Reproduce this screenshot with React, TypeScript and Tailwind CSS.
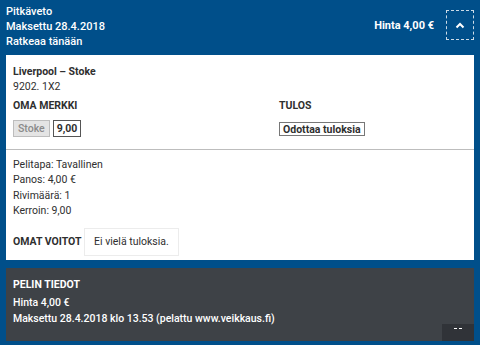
import React from "react";

export default function App() {
  return (
    <div
      className="w-[480px] h-[345px] bg-[#004f8a] overflow-hidden text-[10.5px] leading-[15px]"
      style={{ fontFamily: "Roboto, 'Liberation Sans', sans-serif" }}
    >
      {/* Header */}
      <div className="flex items-start justify-between pl-[6px] pr-[6px] pt-[4px] h-[55px]">
        <div className="text-white font-medium text-[11px]">
          <div>Pitkäveto</div>
          <div>Maksettu 28.4.2018</div>
          <div>Ratkeaa tänään</div>
        </div>
        <div className="flex items-center gap-[12px] pt-[6px]">
          <span className="text-white font-bold text-[11px]">Hinta 4,00 €</span>
          <div className="w-[28px] h-[30px] border border-dashed border-white/80 flex items-center justify-center">
            <svg width="10" height="7" viewBox="0 0 10 7">
              <path d="M1.5 5.5 L5 2 L8.5 5.5" stroke="white" strokeWidth="2" fill="none" />
            </svg>
          </div>
        </div>
      </div>

      {/* White panel */}
      <div className="mx-[6px] bg-white text-[#2f2f2f]">
        <div className="pt-[9px] pl-[7px] pr-[7px] pb-[12px]">
          <div className="font-bold">Liverpool – Stoke</div>
          <div>9202. 1X2</div>
          <div className="grid grid-cols-[266px_1fr] mt-[4px]">
            <div>
              <div className="font-bold">OMA MERKKI</div>
              <div className="flex gap-[3px] mt-[7px]">
                <span className="px-[4px] h-[17px] flex items-center bg-[#e4e4e4] border border-[#bdbdbd] text-[#8a8a8a] font-medium">
                  Stoke
                </span>
                <span className="px-[3px] h-[17px] flex items-center bg-white border border-[#555] font-bold">
                  9,00
                </span>
              </div>
            </div>
            <div>
              <div className="font-bold">TULOS</div>
              <div className="flex mt-[9px]">
                <span className="px-[3px] h-[14px] flex items-center border border-[#777] font-bold">
                  Odottaa tuloksia
                </span>
              </div>
            </div>
          </div>
        </div>
        <div className="h-px bg-[#bdbdbd]" />
        <div className="pt-[7px] pl-[7px] pb-[4px] leading-[15.4px]">
          <div>Pelitapa: Tavallinen</div>
          <div>Panos: 4,00 €</div>
          <div>Rivimäärä: 1</div>
          <div>Kerroin: 9,00</div>
          <div className="flex items-center mt-[9px]">
            <span className="font-bold w-[71px] whitespace-nowrap">OMAT VOITOT</span>
            <span className="h-[28px] px-[9px] flex items-center border border-[#ececec]">
              Ei vielä tuloksia.
            </span>
          </div>
        </div>
      </div>

      {/* Dark panel */}
      <div className="mx-[6px] mt-[8px] h-[73px] bg-[#3e4247] text-white relative">
        <div className="pt-[9px] pl-[7px] leading-[16px]">
          <div className="font-bold">PELIN TIEDOT</div>
          <div className="mt-[2px] font-medium">Hinta 4,00 €</div>
          <div className="font-medium">Maksettu 28.4.2018 klo 13.53 (pelattu www.veikkaus.fi)</div>
        </div>
        <div className="absolute right-0 bottom-0 w-[32px] h-[17px] bg-[#303338] flex items-start justify-center pt-[4px] gap-[2px]">
          <span className="w-[3px] h-[1.5px] bg-white" />
          <span className="w-[3px] h-[1.5px] bg-white" />
        </div>
      </div>
    </div>
  );
}
